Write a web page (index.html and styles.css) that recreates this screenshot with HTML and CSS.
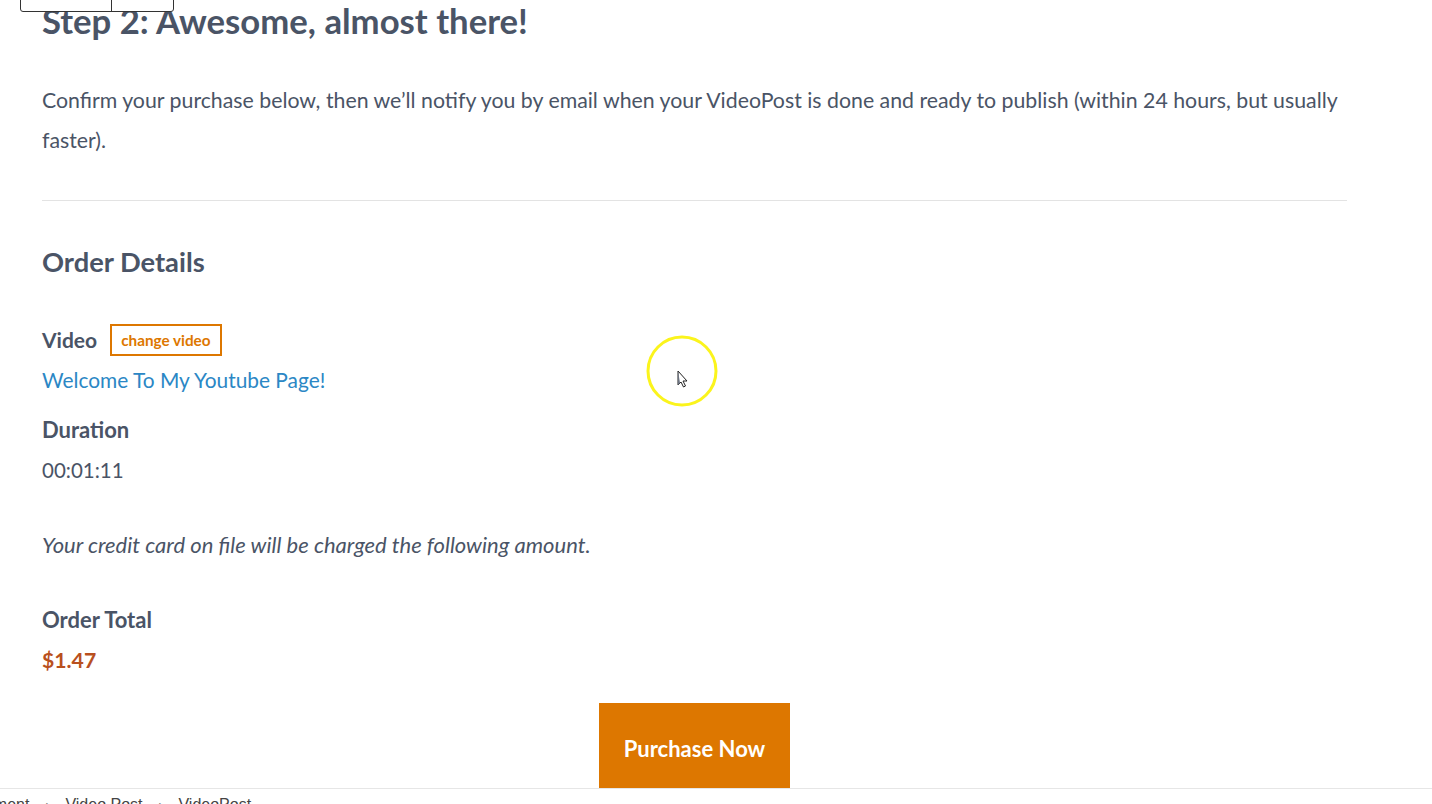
FILE: index.html
```html
<!DOCTYPE html>
<html lang="en">
<head>
<meta charset="UTF-8">
<meta name="viewport" content="width=device-width, initial-scale=1.0">
<title>VideoPost - Confirm Purchase</title>
<link rel="stylesheet" href="styles.css">
</head>
<body>
  <div class="tabs">
    <span class="tab tab-wide"></span>
    <span class="tab"></span>
  </div>

  <div class="content">
    <h1 class="step-title">Step 2: Awesome, almost there!</h1>
    <p class="intro">Confirm your purchase below, then we’ll notify you by email when your VideoPost is done and ready to publish (within 24 hours, but usually faster).</p>

    <hr class="divider">

    <h2 class="section-title">Order Details</h2>

    <div class="field-row">
      <span class="field-label">Video</span>
      <a class="change-btn" href="#">change video</a>
    </div>
    <a class="video-link" href="#">Welcome To My Youtube Page!</a>

    <div class="field-label field-gap">Duration</div>
    <div class="field-value">00:01:11</div>

    <p class="notice">Your credit card on file will be charged the following amount.</p>

    <div class="field-label">Order Total</div>
    <div class="price">$1.47</div>

    <div class="actions">
      <button class="purchase-btn">Purchase Now</button>
    </div>
  </div>

  <div class="cursor-mark">
    <svg width="76" height="76" viewBox="0 0 76 76">
      <circle cx="38" cy="38" r="34" fill="none" stroke="#fbf41c" stroke-width="3"/>
      <path d="M34 38 L34 52 L37 49 L39.5 54 L41.5 53 L39 48 L43 48 Z" fill="#fff" stroke="#222" stroke-width="1"/>
      <path d="M34 38 L34 52 L36 50 Z" fill="#6b7280"/>
    </svg>
  </div>

  <div class="breadcrumbs">
    <span class="crumb crumb-first">Management</span>
    <span class="sep">›</span>
    <span class="crumb">Video Post</span>
    <span class="sep">›</span>
    <span class="crumb">VideoPost</span>
  </div>
</body>
</html>
```

FILE: styles.css
```css
body {
  font-family: Lato, "Open Sans", sans-serif;
  color: #4a5466;
  background: #fff;
  margin: 0;
  padding: 0;
}

.tabs {
  position: absolute;
  top: -1px;
  left: 20px;
  display: flex;
  border: 1px solid #333;
  border-radius: 0 0 3px 3px;
  background: #fff;
}

.tab {
  width: 61px;
  height: 11px;
}

.tab-wide {
  width: 90px;
  border-right: 1px solid #333;
}

.content {
  width: 1305px;
  margin-left: 42px;
}

.step-title {
  margin: 0;
  font-size: 34.7px;
  line-height: 42px;
  font-weight: 700;
}

.intro {
  margin: 38px 0 0;
  font-size: 21.3px;
  line-height: 40px;
}

.divider {
  margin: 40px 0 0;
  border: 0;
  border-top: 1px solid #e3e3e3;
}

.section-title {
  margin: 43px 0 0;
  font-size: 27.3px;
  line-height: 36px;
  font-weight: 700;
}

.field-row {
  display: flex;
  align-items: center;
  gap: 13px;
  margin-top: 44px;
  height: 32px;
}

.field-label {
  font-size: 22px;
  line-height: 40px;
  font-weight: 700;
}

.field-row .field-label {
  font-size: 21px;
}

.field-gap {
  margin-top: 10px;
}

.change-btn {
  display: inline-block;
  padding: 0 9px;
  border: 2px solid #dd7700;
  color: #dd7700;
  font-size: 15.3px;
  font-weight: 700;
  line-height: 28px;
  text-decoration: none;
}

.video-link {
  display: block;
  margin-top: 4px;
  color: #2b87c5;
  font-size: 20.9px;
  line-height: 40px;
  text-decoration: none;
}

.field-value {
  font-size: 20.5px;
  line-height: 40px;
}

.notice {
  margin: 35px 0;
  font-size: 22px;
  line-height: 40px;
  font-style: italic;
}

.price {
  color: #b9501e;
  font-size: 21.2px;
  line-height: 40px;
  font-weight: 700;
}

.actions {
  display: flex;
  justify-content: center;
  margin-top: 23px;
}

.purchase-btn {
  width: 191px;
  height: 90px;
  border: 0;
  background: #dd7700;
  color: #fff;
  font-family: inherit;
  font-size: 22px;
  font-weight: 700;
  cursor: pointer;
}

.cursor-mark {
  position: absolute;
  left: 644px;
  top: 333px;
}

.breadcrumbs {
  position: fixed;
  left: 0;
  right: 0;
  bottom: 0;
  height: 16px;
  overflow: hidden;
  display: flex;
  gap: 16px;
  border-top: 1px solid #e6e6e6;
  background: #fff;
  color: #444;
  font-family: "Liberation Sans", Arial, sans-serif;
  font-size: 16px;
  line-height: 16px;
  padding-top: 8px;
  box-sizing: border-box;
}

.crumb-first {
  margin-left: -64px;
}

.sep {
  font-size: 12px;
  color: #777;
}
```
